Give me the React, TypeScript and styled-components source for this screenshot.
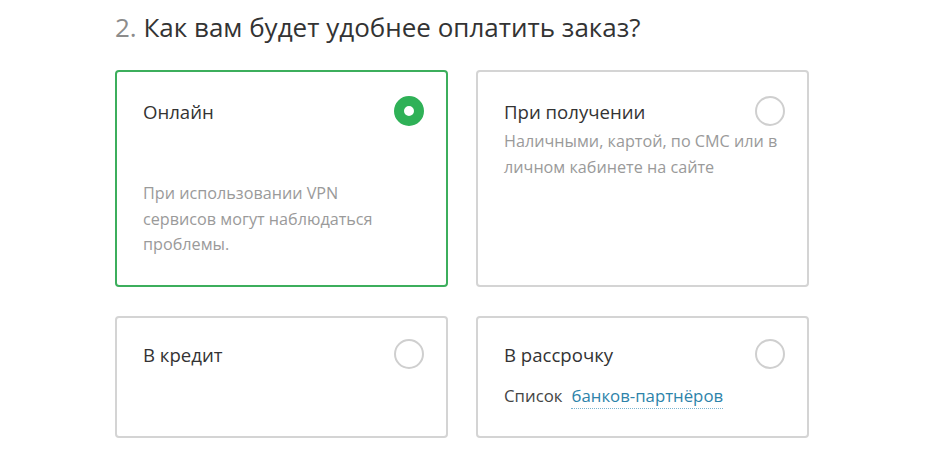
import React from "react";
import styled, { createGlobalStyle } from "styled-components";

const Global = createGlobalStyle`
  html, body { margin: 0; padding: 0; background: #fff; }
  body { font-family: "Open Sans", "Noto Sans", Arial, sans-serif; }
`;

const Page = styled.div`
  padding: 10px 0 0 115px;
  width: 941px;
  box-sizing: border-box;
`;

const Heading = styled.h2`
  margin: 0 0 26px;
  font-size: 26px;
  line-height: 34px;
  font-weight: 400;
  color: #333;
`;

const Num = styled.span`
  color: #8c8c8c;
`;

const Grid = styled.div`
  display: grid;
  grid-template-columns: 333px 333px;
  grid-auto-rows: auto;
  column-gap: 28px;
  row-gap: 29px;
`;

const Card = styled.div<{ $active?: boolean; $h: number; $pt: number }>`
  box-sizing: border-box;
  height: ${(p) => p.$h}px;
  border: 2px solid ${(p) => (p.$active ? "#3cae5c" : "#d4d4d4")};
  border-radius: 4px;
  padding: ${(p) => p.$pt}px 22px 20px 26px;
  display: flex;
  flex-direction: column;
`;

const Head = styled.div`
  display: flex;
  align-items: center;
  justify-content: space-between;
  height: 30px;
`;

const Title = styled.div`
  font-size: 18.6px;
  color: #333;
`;

const Radio = styled.span<{ $checked?: boolean }>`
  box-sizing: border-box;
  width: 30px;
  height: 30px;
  border-radius: 50%;
  border: ${(p) => (p.$checked ? "10px solid #2fb157" : "2px solid #cfcfcf")};
  background: #fff;
`;

const Desc = styled.p<{ $top: number }>`
  margin: ${(p) => p.$top}px 0 0;
  font-size: 16.2px;
  line-height: 25.5px;
  color: #9a9a9a;
`;

const Line = styled.p`
  margin: 14px 0 0;
  font-size: 16.8px;
  line-height: 25px;
  color: #444;
`;

const Link = styled.a`
  color: #2d83aa;
  text-decoration: none;
  border-bottom: 1px dotted #7bb4cf;
  margin-left: 9px;
  padding-bottom: 1px;
`;

export default function App() {
  return (
    <Page>
      <Global />
      <Heading>
        <Num>2.</Num> Как вам будет удобнее оплатить заказ?
      </Heading>
      <Grid>
        <Card $active $h={217} $pt={24}>
          <Head>
            <Title>Онлайн</Title>
            <Radio $checked />
          </Head>
          <Desc $top={55}>
            При использовании VPN
            <br />
            сервисов могут наблюдаться
            <br />
            проблемы.
          </Desc>
        </Card>
        <Card $h={217} $pt={24}>
          <Head>
            <Title>При получении</Title>
            <Radio />
          </Head>
          <Desc $top={3}>
            Наличными, картой, по СМС или в
            <br />
            личном кабинете на сайте
          </Desc>
        </Card>
        <Card $h={122} $pt={21}>
          <Head>
            <Title>В кредит</Title>
            <Radio />
          </Head>
        </Card>
        <Card $h={122} $pt={21}>
          <Head>
            <Title>В рассрочку</Title>
            <Radio />
          </Head>
          <Line>
            Список<Link href="#">банков-партнёров</Link>
          </Line>
        </Card>
      </Grid>
    </Page>
  );
}
